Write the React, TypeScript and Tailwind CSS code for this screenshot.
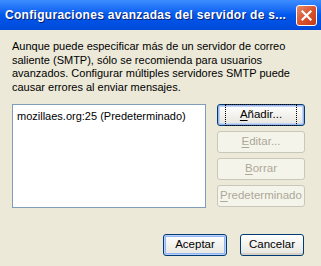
const font = "font-['Liberation_Sans','Arial',sans-serif]";

const XpButton = ({
  label,
  hotkey,
  disabled,
  focused,
  className,
}: {
  label: string;
  hotkey?: number;
  disabled?: boolean;
  focused?: boolean;
  className?: string;
}) => {
  const text =
    hotkey === undefined ? (
      label
    ) : (
      <>
        {label.slice(0, hotkey)}
        <span className="underline underline-offset-2">{label[hotkey]}</span>
        {label.slice(hotkey + 1)}
      </>
    );
  return (
    <div
      className={`flex items-center justify-center rounded-[3px] border h-[22px] text-[11.5px] ${
        disabled
          ? "border-[#c9c7ba] bg-[#f5f4ea] text-[#aca899]"
          : "border-[#003c74] bg-gradient-to-b from-[#ffffff] to-[#e6e5de] text-black shadow-[inset_0_-2px_0_#d6d0c5]"
      } ${focused ? "shadow-[inset_0_0_0_1px_#9bb7e8,inset_0_0_0_2px_#c1d3fb]" : ""} ${className ?? ""}`}
    >
      {focused ? (
        <span className="px-[14px] py-[1px] outline outline-1 outline-dotted outline-black">{text}</span>
      ) : (
        <span>{text}</span>
      )}
    </div>
  );
};

export default function App() {
  return (
    <div className={`w-[321px] h-[266px] bg-[#ece9d8] flex flex-col overflow-hidden ${font}`}>
      {/* title bar */}
      <div className="h-[30px] shrink-0 flex items-center justify-between pl-[5px] pr-[4px] bg-gradient-to-b from-[#3d8dff] via-[#0058ee] to-[#0049d8]">
        <span className="text-white font-bold text-[12px] tracking-[0.3px] whitespace-nowrap overflow-hidden [text-shadow:1px_1px_0_#0a1e6e]">
          Configuraciones avanzadas del servidor de s...
        </span>
        <div className="shrink-0 w-[21px] h-[21px] rounded-[3px] border border-white bg-gradient-to-br from-[#e58a6a] via-[#d9542e] to-[#c13b17] flex items-center justify-center">
          <svg width="13" height="13" viewBox="0 0 13 13">
            <path d="M2.5 2.5 L10.5 10.5 M10.5 2.5 L2.5 10.5" stroke="white" strokeWidth="2.2" strokeLinecap="square" />
          </svg>
        </div>
      </div>

      {/* body */}
      <div className="flex-1 flex flex-col px-[12px] pt-[10px]">
        <p className="text-[11px] leading-[13.5px] text-black">
          Aunque puede especificar más de un servidor de correo saliente (SMTP), sólo se recomienda para usuarios
          avanzados. Configurar múltiples servidores SMTP puede causar errores al enviar mensajes.
        </p>

        <div className="flex gap-[11px] mt-[10px]">
          <div className="w-[194px] h-[104px] bg-white border border-[#7f9db9] px-[4px] pt-[3px] text-[11px] text-black whitespace-nowrap">
            mozillaes.org:25 (Predeterminado)
          </div>
          <div className="flex flex-col gap-[5px] w-[88px]">
            <XpButton label="Añadir..." hotkey={0} focused />
            <XpButton label="Editar..." hotkey={0} disabled />
            <XpButton label="Borrar" hotkey={0} disabled />
            <XpButton label="Predeterminado" hotkey={0} disabled />
          </div>
        </div>

        <div className="flex justify-end gap-[13px] mt-[26px] pr-[5px]">
          <XpButton label="Aceptar" className="w-[64px] shadow-[inset_0_0_0_1px_#b9d1fa,inset_0_0_0_2px_#91b5f6]" />
          <XpButton label="Cancelar" className="w-[64px]" />
        </div>
      </div>
    </div>
  );
}
